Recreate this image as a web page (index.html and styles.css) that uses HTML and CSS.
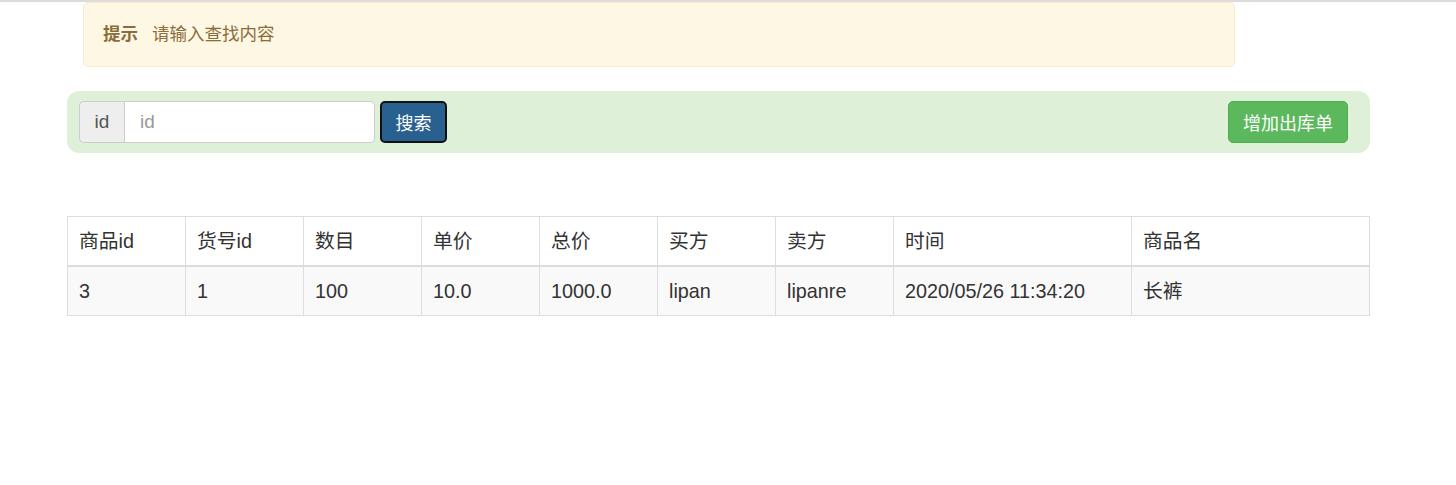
FILE: index.html
```html
<!DOCTYPE html>
<html lang="zh-CN">
<head>
<meta charset="utf-8">
<title>出库单</title>
<link rel="stylesheet" href="styles.css">
</head>
<body>
<div class="page">
  <div class="alert">
    <strong class="alert-title">提示</strong>
    <span class="alert-text">请输入查找内容</span>
  </div>

  <div class="toolbar">
    <div class="search">
      <div class="input-group">
        <span class="addon">id</span>
        <input class="field" type="text" placeholder="id">
      </div>
      <button class="btn btn-primary" type="button">搜索</button>
    </div>
    <button class="btn btn-success" type="button">增加出库单</button>
  </div>

  <table class="grid">
    <colgroup>
      <col class="c-s"><col class="c-s"><col class="c-s"><col class="c-s"><col class="c-s"><col class="c-s"><col class="c-s"><col class="c-l"><col class="c-l">
    </colgroup>
    <thead>
      <tr>
        <th>商品id</th><th>货号id</th><th>数目</th><th>单价</th><th>总价</th><th>买方</th><th>卖方</th><th>时间</th><th>商品名</th>
      </tr>
    </thead>
    <tbody>
      <tr>
        <td>3</td><td>1</td><td>100</td><td>10.0</td><td>1000.0</td><td>lipan</td><td>lipanre</td><td>2020/05/26 11:34:20</td><td>长裤</td>
      </tr>
    </tbody>
  </table>
</div>
</body>
</html>
```

FILE: styles.css
```css
html, body {
  margin: 0;
  padding: 0;
  background: #fff;
}
body {
  border-top: 2px solid #dcdcdc;
  font-family: "Liberation Sans", Arial, "Noto Sans CJK SC", sans-serif;
  color: #333;
}
.page {
  width: 1303px;
  margin-left: 67px;
}

/* alert */
.alert {
  box-sizing: border-box;
  margin-left: 16px;
  width: 1152px;
  height: 65px;
  padding: 0 19px 4px;
  display: flex;
  align-items: center;
  gap: 14px;
  background: #fdf7e3;
  border: 1px solid #faebcc;
  border-radius: 5px;
  color: #8a6d3b;
  font-size: 17.5px;
}
.alert-title {
  font-weight: bold;
}

/* toolbar */
.toolbar {
  box-sizing: border-box;
  margin-top: 24px;
  height: 62px;
  padding: 10px 22px 10px 12px;
  display: flex;
  align-items: center;
  justify-content: space-between;
  background: #dff0d8;
  border-radius: 12px;
}
.search {
  display: flex;
  align-items: center;
  gap: 5px;
}
.input-group {
  display: flex;
  height: 42px;
}
.addon {
  box-sizing: border-box;
  width: 45px;
  height: 42px;
  display: flex;
  align-items: center;
  justify-content: center;
  background: #eee;
  border: 1px solid #ccc;
  border-right: 0;
  border-radius: 5px 0 0 5px;
  color: #555;
  font-size: 19px;
}
.field {
  box-sizing: border-box;
  width: 251px;
  height: 42px;
  margin: 0;
  padding: 0 15px;
  border: 1px solid #ccc;
  border-radius: 0 5px 5px 0;
  font-family: "Liberation Sans", Arial, sans-serif;
  font-size: 19px;
  color: #555;
  background: #fff;
  outline: none;
}
.field::placeholder {
  color: #999;
}
.btn {
  box-sizing: border-box;
  height: 42px;
  margin: 0;
  padding: 0;
  font-family: "Liberation Sans", Arial, "Noto Sans CJK SC", sans-serif;
  font-size: 18px;
  color: #fff;
  border-radius: 5px;
  cursor: pointer;
}
.btn-primary {
  width: 67px;
  background: #286090;
  border: 2px solid #111;
}
.btn-success {
  width: 120px;
  background: #5cb85c;
  border: 1px solid #4cae4c;
}

/* table */
.grid {
  margin-top: 63px;
  width: 1302px;
  border-collapse: collapse;
  table-layout: fixed;
  font-size: 19.8px;
  color: #333;
}
.c-s { width: 118px; }
.c-l { width: 238px; }
.grid th,
.grid td {
  padding: 10px 11px;
  line-height: 28px;
  text-align: left;
  font-weight: normal;
  border: 1px solid #ddd;
  white-space: nowrap;
}
.grid thead th {
  border-bottom: 2px solid #ddd;
}
.grid tbody tr {
  background: #f9f9f9;
}
```
